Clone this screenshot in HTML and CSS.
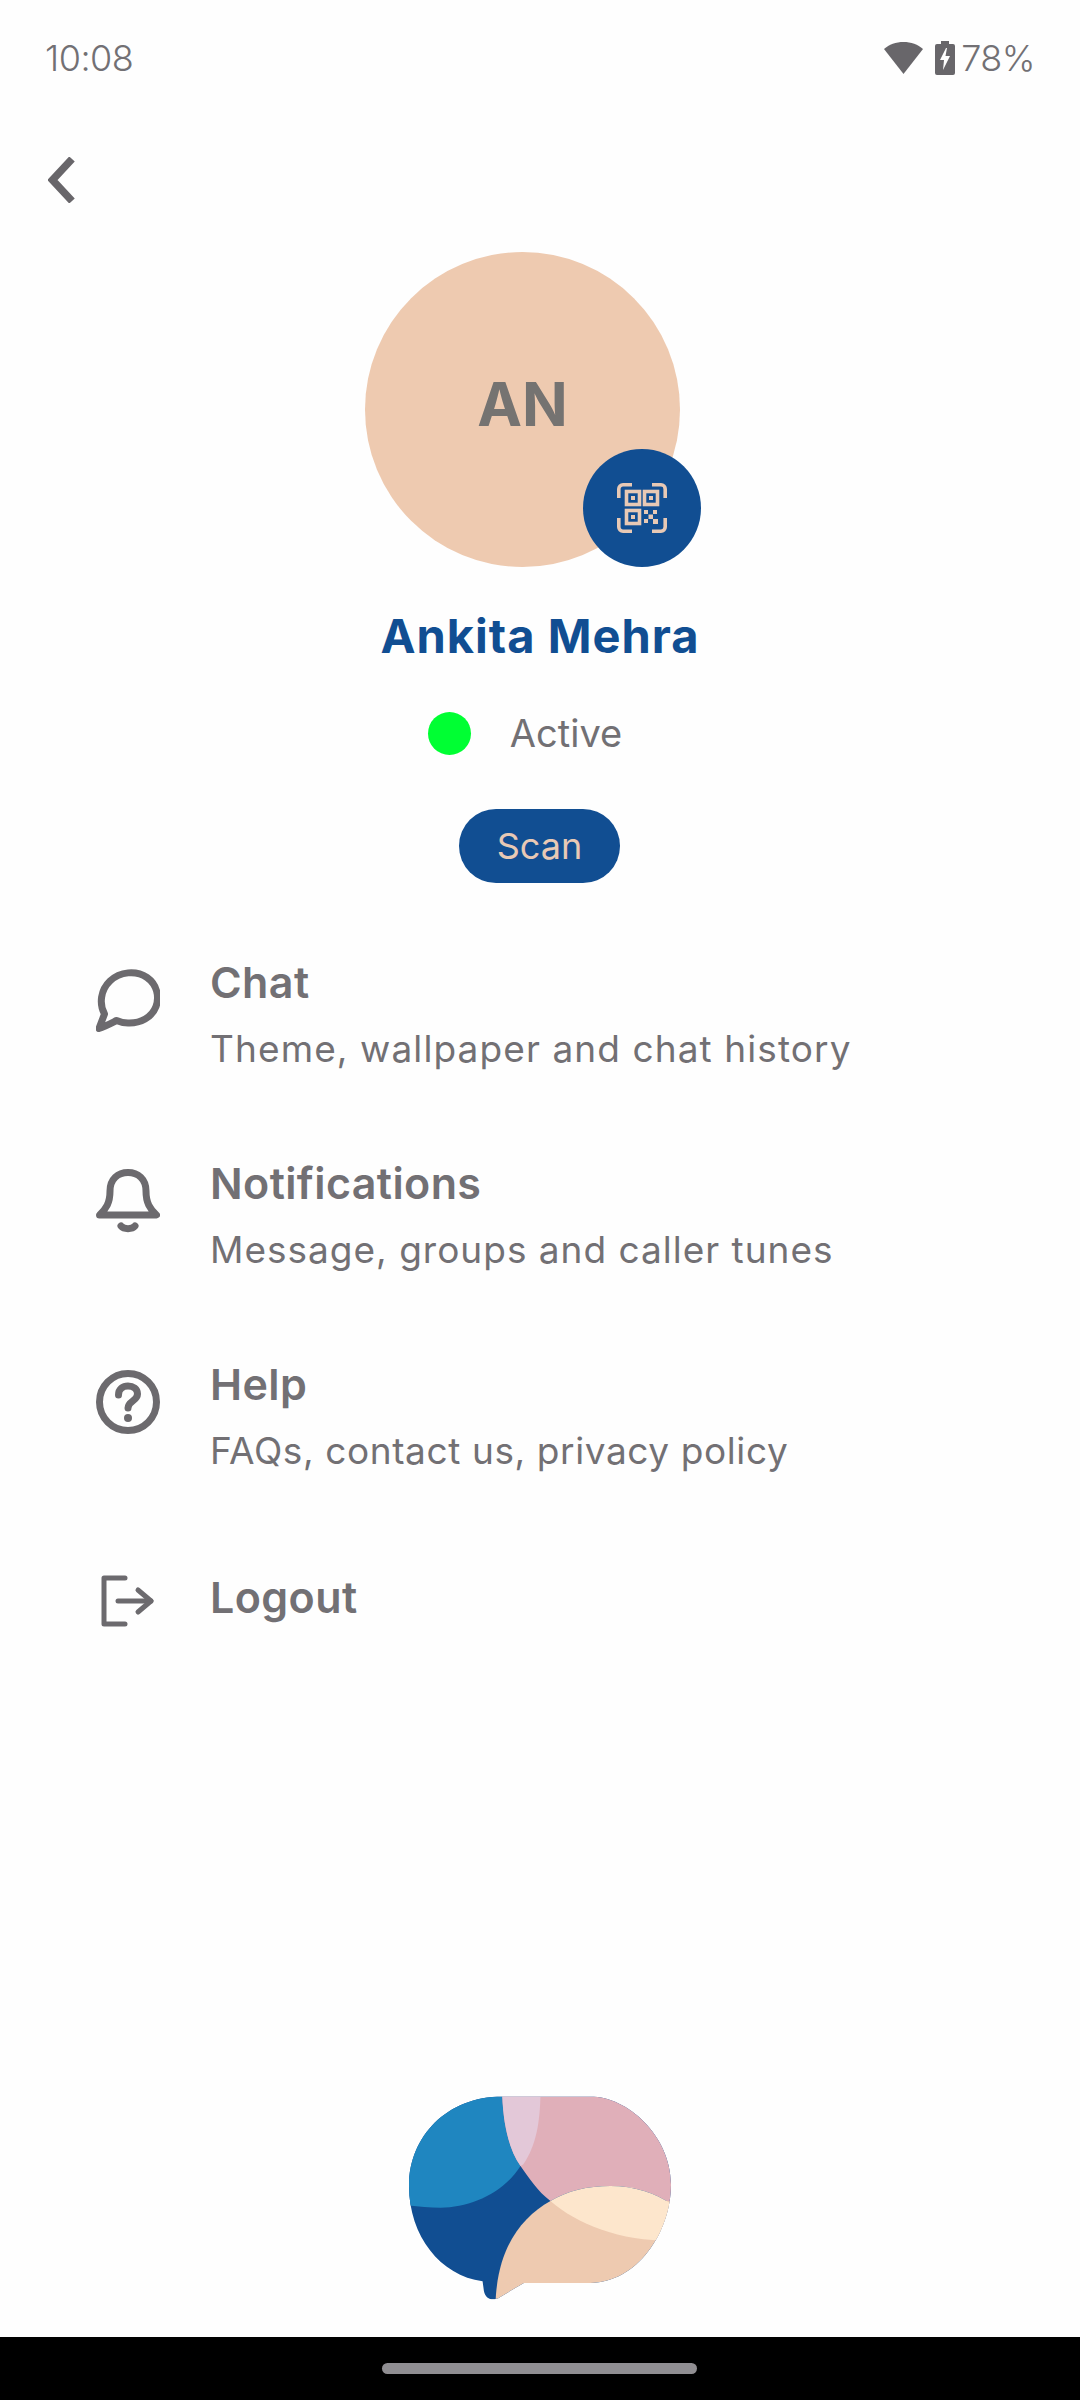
FILE: index.html
```html
<!DOCTYPE html>
<html lang="en">
<head>
  <meta charset="UTF-8">
  <meta name="viewport" content="width=device-width, initial-scale=1.0">
  <title>Profile</title>
  <link rel="stylesheet" href="styles.css">
</head>
<body>
<div class="page">
  <div class="status-bar">
    <span class="time">10:08</span>
    <div class="status-right">
      <svg class="wifi" viewBox="0 0 39 32"><path d="M19.5 0C12 0 5 2.500 0 7L19.500 32 39 7C34 2.500 27 0 19.500 0Z"/></svg>
      <svg class="battery" viewBox="0 0 20 34"><path fill-rule="evenodd" d="M6 0h8v3h4a2 2 0 0 1 2 2v27a2 2 0 0 1-2 2H2a2 2 0 0 1-2-2V5a2 2 0 0 1 2-2h4ZM11 7 5 19h4l-1 10 7-14h-4.500l1.500-8Z"/></svg>
      <span class="percent">78%</span>
    </div>
  </div>

  <a class="back" href="#">
    <svg viewBox="0 0 27 46"><path d="M24 2 4.500 23 24 44"/></svg>
  </a>

  <div class="profile">
    <div class="avatar">
      <span class="initials">AN</span>
      <div class="qr-badge">
        <svg viewBox="0 0 50 50">
          <g class="qr-line">
            <path d="M1.800 15V6a4.200 4.200 0 0 1 4.200-4.200h9"/>
            <path d="M35 1.800h9a4.200 4.200 0 0 1 4.200 4.200v9"/>
            <path d="M48.200 35v9a4.200 4.200 0 0 1-4.200 4.200h-9"/>
            <path d="M15 48.200H6a4.200 4.200 0 0 1-4.200-4.200v-9"/>
            <rect x="9.500" y="8.500" width="13" height="13"/>
            <rect x="27.500" y="8.500" width="13" height="13"/>
            <rect x="9.500" y="27.500" width="13" height="13"/>
          </g>
          <g class="qr-fill">
            <rect x="14" y="13" width="4" height="4"/>
            <rect x="32" y="13" width="4" height="4"/>
            <rect x="14" y="32" width="4" height="4"/>
            <rect x="27" y="27" width="4" height="4"/>
            <rect x="36" y="27" width="4" height="4"/>
            <rect x="31.500" y="31.500" width="4.500" height="4.500"/>
            <rect x="27" y="36" width="4" height="4"/>
            <rect x="36" y="36" width="5" height="5"/>
          </g>
        </svg>
      </div>
    </div>
    <h1 class="name">Ankita Mehra</h1>
    <div class="presence">
      <span class="dot"></span>
      <span class="presence-text">Active</span>
    </div>
    <button class="scan">Scan</button>
  </div>

  <div class="menu">
    <div class="row">
      <svg class="row-icon" viewBox="0 0 64 64"><path d="M3 60.500 8.500 46C3 36 4.500 22 14 13 24 3.500 40 2 51 9.500c10 7 12.500 19 9 29-4 11-15.500 17-28 16.500-5 0-8-1-11.500-2.500-5 2.500-11.500 6-17.500 8Z"/></svg>
      <div class="row-text">
        <div class="row-title">Chat</div>
        <div class="row-sub">Theme, wallpaper and chat history</div>
      </div>
    </div>
    <div class="row">
      <svg class="row-icon" viewBox="0 0 64 64"><path d="M14 22C14 10 22 3.500 32 3.500S50 10 50 22c0 12 4 18 10.500 24H3.500C10 40 14 34 14 22Z"/><path d="M25 57c3 3.500 11 3.500 14 0"/></svg>
      <div class="row-text">
        <div class="row-title">Notifications</div>
        <div class="row-sub row-sub-message">Message, groups and caller tunes</div>
      </div>
    </div>
    <div class="row">
      <svg class="row-icon" viewBox="0 0 64 64">
        <circle cx="32" cy="32" r="28.500"/>
        <path d="M22.500 25c0-6 4.500-9 9.500-9s9.500 3 9.500 8c0 7-9.500 7-9.500 14"/>
        <circle class="help-dot" cx="32" cy="48" r="4"/>
      </svg>
      <div class="row-text">
        <div class="row-title">Help</div>
        <div class="row-sub row-sub-help">FAQs, contact us, privacy policy</div>
      </div>
    </div>
    <div class="row row-logout">
      <svg class="row-icon logout-icon" viewBox="0 0 64 64"><path d="M29 9H8v46h21"/><path d="M22 32h33"/><path d="M42 21l13 11-13 11"/></svg>
      <div class="row-text">
        <div class="row-title">Logout</div>
      </div>
    </div>
  </div>

  <div class="footer-logo">
    <svg viewBox="85 80 790 612">
      <defs>
        <clipPath id="bubble">
          <path d="M365 81H630C742 81 872 200 872 345C872 490 770 641 630 641H430L358 684C340 696 315 692 310 665L306 636C180 620 85 500 85 350C85 200 200 81 365 81Z"/>
        </clipPath>
      </defs>
      <g clip-path="url(#bubble)">
        <rect class="logo-dark" x="80" y="75" width="800" height="625"/>
        <path class="logo-sky" d="M80 75H365C368 165 385 240 420 290C370 370 270 415 180 415C145 415 110 412 80 408Z"/>
        <path class="logo-pink" d="M365 75H880V408C830 375 770 350 690 350C620 350 560 365 510 395C470 365 445 325 420 290C385 240 368 165 365 75Z"/>
        <path class="logo-mauve" d="M365 75H480C478 150 470 225 428 285L420 290C385 240 368 165 365 75Z"/>
        <path class="logo-peach" d="M510 395C420 445 350 540 345 700H880V395Z"/>
        <path class="logo-cream" d="M510 395C560 365 620 350 690 350C770 350 830 375 880 408V515C800 515 730 505 660 480C600 458 550 430 510 395Z"/>
      </g>
    </svg>
  </div>
</div>
<div class="nav-bar"><span class="home-pill"></span></div>
</body>
</html>
```

FILE: styles.css
```css
body {
    margin: 0;
    width: 1080px;
    height: 2400px;
    overflow: hidden;
    background-color: #fefefe;
    color: #727074;
    font-family: Inter, "Open Sans", sans-serif;
}

.page {
    height: 2337px;
    display: flex;
    flex-direction: column;
}

/* status bar */
.status-bar {
    display: flex;
    justify-content: space-between;
    align-items: center;
    height: 44px;
    padding: 36px 45px 0;
}
.time, .percent {
    font-size: 36px;
    font-weight: 300;
    letter-spacing: -0.5px;
}
.status-right {
    display: flex;
    align-items: center;
}
.wifi {
    width: 39px;
    height: 32px;
    fill: #68666a;
}
.battery {
    width: 20px;
    height: 34px;
    margin-left: 12px;
    fill: #68666a;
}
.percent {
    margin-left: 6px;
}

.back {
    display: block;
    width: 27px;
    height: 46px;
    margin: 77px 0 0 48px;
}
.back svg {
    display: block;
    fill: none;
    stroke: #68666a;
    stroke-width: 7.500;
}

/* profile */
.profile {
    display: flex;
    flex-direction: column;
    align-items: center;
    margin-top: 49px;
}
.avatar {
    position: relative;
    width: 315px;
    height: 315px;
    margin-right: 35px;
    border-radius: 50%;
    background-color: #eecab0;
    display: flex;
    justify-content: center;
    align-items: center;
}
.initials {
    margin-bottom: 12px;
    font-size: 60px;
    font-weight: 700;
    color: #757371;
}
.qr-badge {
    position: absolute;
    left: 218px;
    top: 197px;
    width: 118px;
    height: 118px;
    border-radius: 50%;
    background-color: #114e92;
    display: flex;
    justify-content: center;
    align-items: center;
}
.qr-badge svg {
    width: 50px;
    height: 50px;
}
.qr-line {
    fill: none;
    stroke: #e8c9b5;
    stroke-width: 3.600;
}
.qr-fill {
    fill: #e8c9b5;
}
.name {
    margin: 39px 0 0;
    font-size: 47px;
    line-height: 60px;
    font-weight: 700;
    letter-spacing: 1px;
    color: #114e92;
}
.presence {
    display: flex;
    align-items: center;
    height: 44px;
    margin: 45px 30px 0 0;
}
.dot {
    width: 43px;
    height: 43px;
    border-radius: 50%;
    background-color: #00ff33;
}
.presence-text {
    margin-left: 39px;
    font-size: 38px;
}
.scan {
    width: 161px;
    height: 74px;
    margin: 54px 1px 0 0;
    padding: 0;
    border: none;
    border-radius: 37px;
    background-color: #114e92;
    color: #e8c9b5;
    font-family: inherit;
    font-size: 36px;
}

/* menu */
.menu {
    display: flex;
    flex-direction: column;
    gap: 86px;
    margin-top: 74px;
    padding-left: 96px;
}
.row {
    display: flex;
    align-items: flex-start;
}
.row-logout {
    margin-top: 12px;
}
.row-icon {
    flex: none;
    width: 64px;
    height: 64px;
    margin: 11px 50px 0 0;
    fill: none;
    stroke: #6c6a6e;
    stroke-width: 7;
    stroke-linejoin: round;
    stroke-linecap: round;
}
.logout-icon {
    stroke-width: 5;
    margin-top: -3px;
}
.help-dot {
    fill: #6c6a6e;
    stroke: none;
}
.row-title {
    font-size: 43px;
    line-height: 50px;
    font-weight: 600;
    letter-spacing: 0.4px;
}
.row-sub {
    margin-top: 19px;
    font-size: 37px;
    line-height: 46px;
    letter-spacing: 1.1px;
}
.row-sub-message {
    letter-spacing: 1px;
}
.row-sub-help {
    letter-spacing: 0.6px;
}

/* logo at the bottom */
.footer-logo {
    margin-top: auto;
    padding-bottom: 37px;
    display: flex;
    justify-content: center;
}
.footer-logo svg {
    display: block;
    width: 263px;
    height: 204px;
}
.logo-dark { fill: #114e92; }
.logo-sky { fill: #1f86c0; }
.logo-pink { fill: #e0afb9; }
.logo-mauve { fill: #e3c8d8; }
.logo-peach { fill: #eecab0; }
.logo-cream { fill: #fde6cc; }

.nav-bar {
    height: 63px;
    background-color: #000;
    display: flex;
    justify-content: center;
    align-items: center;
}
.home-pill {
    width: 315px;
    height: 11px;
    margin-right: 1px;
    border-radius: 6px;
    background-color: #908e92;
}
```
